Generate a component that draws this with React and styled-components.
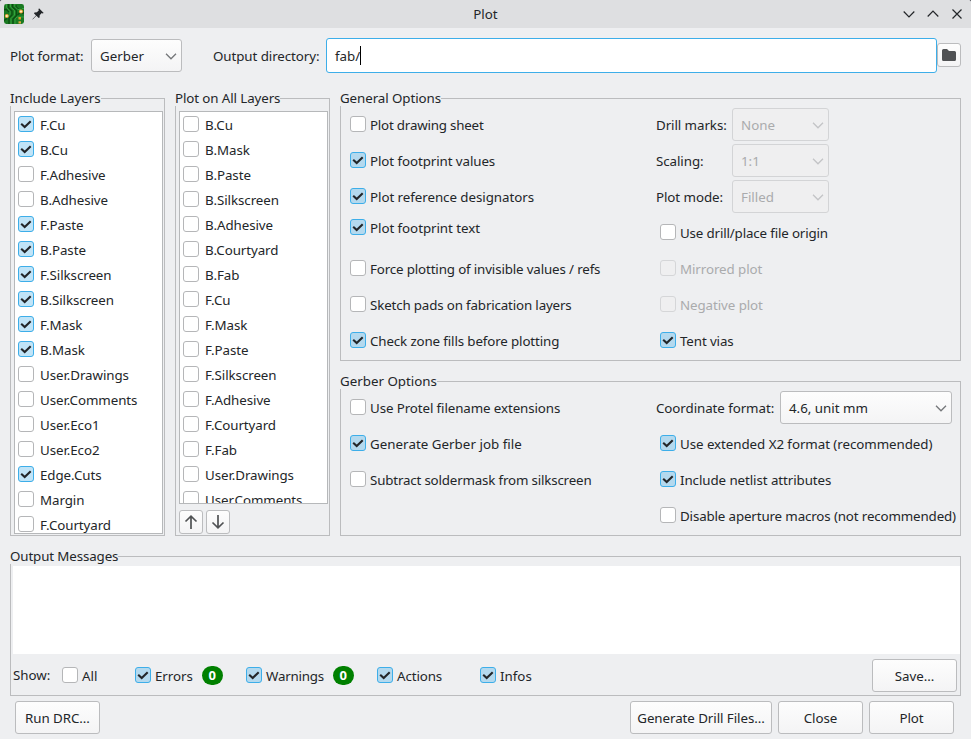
import React from "react";
import styled, { createGlobalStyle, css } from "styled-components";

const C = {
  page: "#eeeff1",
  title: "#dedfe1",
  line: "#bbbcbe",
  text: "#232629",
  accent: "#3daee9",
};

const Global = createGlobalStyle`
  html, body { margin: 0; background: #50535b; }
  body { overflow: hidden; font: 13.333px/18px "Noto Sans", sans-serif; color: ${C.text}; }
  * { box-sizing: border-box; }
`;

const Window = styled.div`
  width: 971px;
  height: 739px;
  background: ${C.page};
  border-radius: 3px 3px 0 0;
  overflow: hidden;
  display: flex;
  flex-direction: column;
  white-space: nowrap;
`;

const TitleBar = styled.header`
  height: 28px;
  flex: none;
  background: ${C.title};
  display: grid;
  grid-template-columns: 1fr auto 1fr;
  align-items: center;
  padding: 0 8px 0 4px;
`;
const TitleIcons = styled.div`
  display: flex;
  align-items: center;
  gap: 7px;
`;
const TitleText = styled.div`
  padding: 0 0 1px 4px;
`;
const WindowControls = styled.div`
  display: flex;
  justify-content: flex-end;
  gap: 12px;
  svg { display: block; }
`;

const TopRow = styled.div`
  height: 35px;
  margin: 10px 10px 0;
  flex: none;
  display: flex;
  align-items: center;
`;
const FieldLabel = styled.label`
  width: ${(p) => p.$w}px;
  margin-left: ${(p) => p.$ml || 0}px;
  letter-spacing: -0.07px;
  flex: none;
`;
const PathInput = styled.div`
  width: 611px;
  height: 35px;
  flex: none;
  background: #fff;
  border: 1px solid ${C.accent};
  border-radius: 3px;
  padding: 0 0 0 8px;
  display: flex;
  align-items: center;
`;
const Caret = styled.span`
  width: 1px;
  height: 19px;
  background: #000;
`;

const face = css`
  border: 1px solid ${C.line};
  border-radius: 3px;
  background: linear-gradient(#fdfdfd, #f4f4f5);
`;
const Button = styled.button`
  ${face}
  width: ${(p) => p.$w}px;
  height: 33px;
  flex: none;
  padding: 0;
  font: inherit;
  letter-spacing: -0.06px;
  color: inherit;
  display: flex;
  align-items: center;
  justify-content: center;
`;
const IconButton = styled(Button)`
  width: 24px;
  height: 24px;
  margin-bottom: 1px;
`;
const SaveButton = styled(Button)`
  margin-top: 1px;
`;
const SelectBox = styled.div`
  ${face}
  width: ${(p) => p.$w}px;
  height: 33px;
  flex: none;
  display: flex;
  align-items: center;
  justify-content: space-between;
  padding: 0 4px 0 8px;
  ${(p) => p.$off && css`
    color: #aaabad;
    background: #efeff0;
    border-color: #d3d4d6;
  `}
`;

const Group = styled.fieldset`
  margin: 0;
  padding: 0;
  border: 1px solid ${C.line};
  width: ${(p) => p.$w}px;
  height: ${(p) => p.$h}px;
  flex: none;
  min-width: 0;
  display: flow-root;
`;
const GroupTitle = styled.div`
  width: max-content;
  height: 15px;
  line-height: 15px;
  margin: -8px 0 0 -1px;
  background: ${C.page};
  letter-spacing: ${(p) => p.$ls || 0}px;
`;

const Panels = styled.div`
  display: flex;
  gap: 10px;
  margin: 25px 10px 0;
`;
const OptionPanels = styled.div`
  display: flex;
  flex-direction: column;
  gap: 20px;
`;

const LayerList = styled.div`
  width: 149px;
  height: ${(p) => p.$h}px;
  margin: 5px 0 0 3px;
  padding: 0 0 0 3px;
  background: #fff;
  border: 1px solid #b6b8ba;
  overflow: hidden;
`;
const LayerRow = styled.div`
  height: 25px;
  padding-bottom: 1px;
  display: flex;
  align-items: center;
  gap: 6px;
  letter-spacing: -0.07px;
`;
const OrderButtons = styled.div`
  display: flex;
  gap: 3px;
  margin: 6px 0 0 3px;
`;

const Box = styled.span`
  width: 16px;
  height: 16px;
  flex: none;
  border: 1px solid #b5b6b8;
  border-radius: 3px;
  background: #fff;
  display: flex;
  ${(p) => p.$on && css`
    border-color: ${C.accent};
    background: ${p.$list ? "#c1e4f7" : "#b4d9ee"};
  `}
  ${(p) => p.$off && css`
    border-color: #d5d6d8;
    background: #efeff0;
  `}
`;
const CheckText = styled.span`
  padding-top: 2px;
`;
const CheckRow = styled.label`
  height: ${(p) => p.$h || 36}px;
  margin: 0 0 ${(p) => p.$mb || 0}px ${(p) => p.$ml || 0}px;
  display: flex;
  align-items: center;
  gap: 4px;
  letter-spacing: ${(p) => p.$ls || 0}px;
  color: ${(p) => (p.$off ? "#aaabad" : "inherit")};
`;

const Columns = styled.div`
  display: grid;
  grid-template-columns: 306px 1fr;
  margin-left: 9px;
`;
const SelectRow = styled.div`
  height: 36px;
  padding-top: 1px;
  display: flex;
  align-items: center;
`;

const Output = styled.div`
  margin: 20px 10px 0;
`;
const Messages = styled.div`
  height: 88px;
  margin: 2px 0 0 2px;
  background: #fff;
`;
const ShowRow = styled.div`
  height: 40px;
  display: flex;
  align-items: center;
  padding: 2px 3px 0 2px;
`;
const ShowLabel = styled.span`
  width: 49px;
  flex: none;
`;
const Filter = styled.div`
  width: ${(p) => p.$w}px;
  flex: none;
  display: flex;
  align-items: center;
  gap: 9px;
`;
const Badge = styled.span`
  width: 21px;
  height: 19px;
  border-radius: 10px;
  background: #008000;
  color: #fff;
  font-weight: 700;
  font-size: 13px;
  display: flex;
  align-items: center;
  justify-content: center;
`;
const Spacer = styled.div`
  flex: 1;
`;
const Footer = styled.footer`
  display: flex;
  gap: 6px;
  margin: 5px 17px 0 15px;
`;

const Tick = () => (
  <svg width="14" height="14" viewBox="0 0 14 14">
    <path d="M2.2 6.700 5.700 10 11.700 4.200" fill="none" stroke={C.text} strokeWidth="2.1" />
  </svg>
);

const Chevron = ({ color = "#75777a" }) => (
  <svg width="12" height="8" viewBox="0 0 12 8">
    <path d="M1 1.800 6 6.800 11 1.800" fill="none" stroke={color} strokeWidth="1.3" />
  </svg>
);

const BoardIcon = () => (
  <svg width="20" height="20" viewBox="0 0 20 20">
    <rect width="20" height="20" rx="2.4" fill="#1a7a22" />
    <g fill="none" stroke="#0c4d12" strokeWidth="1.3">
      <path d="M4.500 0v3.500L8 7v4l-3 3v6M8.500 0v3l4 3.500v5L9 15v5M0 5.500h2.500L5 8M12 1v2l3 2.500" />
      <path d="M20 9h-4.500L13.500 11M0 16.500l3-2" />
    </g>
    <g fill="none" stroke="#35a63e" strokeWidth="0.9">
      <path d="M6.500 0v3l4 3.500v4.500L7 14.500V20M2.500 0v3.500L6 7.500v3L3 13M10.800 0v2.500l3 3h3M20 4.500h-2M11 20v-5l2-2h7" />
    </g>
    <circle cx="17" cy="7.500" r="2" fill="#f2a63b" />
    <circle cx="17" cy="7.500" r="1" fill="#fff3cb" />
    <circle cx="2.800" cy="12" r="2" fill="#f2a63b" />
    <circle cx="2.800" cy="12" r="1" fill="#fff3cb" />
    <rect x="14.500" y="13" width="2.500" height="2.500" fill="#d99a2c" />
    <rect x="14.500" y="17.300" width="2.500" height="2.200" fill="#e2a83c" />
  </svg>
);

const PinIcon = () => (
  <svg width="14" height="14" viewBox="0 0 14 14">
    <path d="M8 1.300 12.700 6 11.400 6.500 10.700 6.100 8.700 8.200 8.600 10.400 7.700 11.100 5.400 8.800 2 12.300 1.400 12.500 1.600 11.900 5 8.400 2.900 6.300 3.600 5.400 5.900 5.300 7.900 3.300 7.400 2.600Z" fill={C.text} />
  </svg>
);

const FolderIcon = () => (
  <svg width="14" height="12" viewBox="0 0 14 12">
    <path d="M0 1.500Q0 0 1.500 0H5L7 2H12.500Q14 2 14 3.500V10.500Q14 12 12.500 12H1.500Q0 12 0 10.500Z" fill="#505254" />
  </svg>
);

const Arrow = ({ down }) => (
  <svg width="14" height="14" viewBox="0 0 14 14">
    <path
      d={down ? "M7 0V13M1.500 7.500 7 12.800 12.500 7.500" : "M7 14V1M1.500 6.500 7 1.200 12.500 6.500"}
      fill="none"
      stroke="#505254"
      strokeWidth="1.7"
    />
  </svg>
);

const WindowIcon = ({ d }) => (
  <svg width="12" height="12" viewBox="0 0 12 12">
    <path d={d} fill="none" stroke={C.text} strokeWidth="1.2" />
  </svg>
);

/* `trim` is the number of pixels taken off the label's natural width. */
const Check = ({ label, on, off, trim = 0, ...rest }) => (
  <CheckRow $off={off} $ls={-trim / label.length} {...rest}>
    <Box $on={on} $off={off}>{on && <Tick />}</Box>
    <CheckText>{label}</CheckText>
  </CheckRow>
);

const Layers = ({ items, h }) => (
  <LayerList $h={h}>
    {items.map(([name, on]) => (
      <LayerRow key={name}>
        <Box $on={on} $list>{on && <Tick />}</Box>
        <CheckText>{name}</CheckText>
      </LayerRow>
    ))}
  </LayerList>
);

const Select = ({ w, off, children }) => (
  <SelectBox $w={w} $off={off}>
    <span>{children}</span>
    <Chevron color={off ? "#c3c4c6" : undefined} />
  </SelectBox>
);

const included = [
  ["F.Cu", 1], ["B.Cu", 1], ["F.Adhesive"], ["B.Adhesive"], ["F.Paste", 1], ["B.Paste", 1],
  ["F.Silkscreen", 1], ["B.Silkscreen", 1], ["F.Mask", 1], ["B.Mask", 1], ["User.Drawings"],
  ["User.Comments"], ["User.Eco1"], ["User.Eco2"], ["Edge.Cuts", 1], ["Margin"], ["F.Courtyard"],
];
const onAll = [
  "B.Cu", "B.Mask", "B.Paste", "B.Silkscreen", "B.Adhesive", "B.Courtyard", "B.Fab", "F.Cu",
  "F.Mask", "F.Paste", "F.Silkscreen", "F.Adhesive", "F.Courtyard", "F.Fab", "User.Drawings",
  "User.Comments",
].map((n) => [n]);

export default function App() {
  return (
    <>
      <Global />
      <Window>
        <TitleBar>
          <TitleIcons><BoardIcon /><PinIcon /></TitleIcons>
          <TitleText>Plot</TitleText>
          <WindowControls>
            <WindowIcon d="M.7 3.500 6 8.800 11.300 3.500" />
            <WindowIcon d="M.7 8.500 6 3.200 11.300 8.500" />
            <WindowIcon d="M1.500 1.500 10.500 10.500M10.500 1.500 1.500 10.500" />
          </WindowControls>
        </TitleBar>
        <TopRow>
          <FieldLabel $w={81}>Plot format:</FieldLabel>
          <Select w={91}>Gerber</Select>
          <FieldLabel $w={113} $ml={31}>Output directory:</FieldLabel>
          <PathInput>fab/<Caret /></PathInput>
          <IconButton><FolderIcon /></IconButton>
        </TopRow>
        <Panels>
          <Group $w={155} $h={438}>
            <GroupTitle>Include Layers</GroupTitle>
            <Layers items={included} h={423} />
          </Group>
          <Group $w={155} $h={438}>
            <GroupTitle $ls={-0.1}>Plot on All Layers</GroupTitle>
            <Layers items={onAll} h={393} />
            <OrderButtons>
              <IconButton><Arrow /></IconButton>
              <IconButton><Arrow down /></IconButton>
            </OrderButtons>
          </Group>
          <OptionPanels>
            <Group $w={621} $h={263}>
              <GroupTitle $ls={-0.08}>General Options</GroupTitle>
              <Columns>
                <div>
                  <Check label="Plot drawing sheet" trim={3.5} />
                  <Check label="Plot footprint values" on trim={1.7} />
                  <Check label="Plot reference designators" on trim={1.3} />
                  <Check label="Plot footprint text" on trim={1} $h={26} $mb={10} />
                  <Check label="Force plotting of invisible values / refs" trim={5.8} />
                  <Check label="Sketch pads on fabrication layers" trim={5} />
                  <Check label="Check zone fills before plotting" on trim={4} />
                </div>
                <div>
                  <SelectRow><FieldLabel $w={76}>Drill marks:</FieldLabel><Select w={97} off>None</Select></SelectRow>
                  <SelectRow><FieldLabel $w={76}>Scaling:</FieldLabel><Select w={97} off>1:1</Select></SelectRow>
                  <SelectRow><FieldLabel $w={76}>Plot mode:</FieldLabel><Select w={97} off>Filled</Select></SelectRow>
                  <Check label="Use drill/place file origin" trim={4} $ml={4} />
                  <Check label="Mirrored plot" off trim={1} $ml={4} />
                  <Check label="Negative plot" off trim={1} $ml={4} />
                  <Check label="Tent vias" on trim={1} $ml={4} />
                </div>
              </Columns>
            </Group>
            <Group $w={621} $h={155}>
              <GroupTitle>Gerber Options</GroupTitle>
              <Columns>
                <div>
                  <Check label="Use Protel filename extensions" trim={3} />
                  <Check label="Generate Gerber job file" on trim={-0.8} />
                  <Check label="Subtract soldermask from silkscreen" trim={6} />
                </div>
                <div>
                  <SelectRow><FieldLabel $w={124}>Coordinate format:</FieldLabel><Select w={172}>4.6, unit mm</Select></SelectRow>
                  <Check label="Use extended X2 format (recommended)" on trim={2} $ml={4} />
                  <Check label="Include netlist attributes" on trim={2} $ml={4} />
                  <Check label="Disable aperture macros (not recommended)" trim={5.5} $ml={4} />
                </div>
              </Columns>
            </Group>
          </OptionPanels>
        </Panels>
        <Output>
          <Group $w={951} $h={140}>
            <GroupTitle $ls={-0.12}>Output Messages</GroupTitle>
            <Messages />
            <ShowRow>
              <ShowLabel>Show:</ShowLabel>
              <Filter $w={73}><Check label="All" /></Filter>
              <Filter $w={111}><Check label="Errors" on trim={0.3} /><Badge>0</Badge></Filter>
              <Filter $w={131}><Check label="Warnings" on trim={1.8} /><Badge>0</Badge></Filter>
              <Filter $w={103}><Check label="Actions" on trim={0.7} /></Filter>
              <Filter $w={60}><Check label="Infos" on /></Filter>
              <Spacer />
              <SaveButton $w={85}>Save...</SaveButton>
            </ShowRow>
          </Group>
        </Output>
        <Footer>
          <Button $w={85}>Run DRC...</Button>
          <Spacer />
          <Button $w={142}>Generate Drill Files...</Button>
          <Button $w={85}>Close</Button>
          <Button $w={85}>Plot</Button>
        </Footer>
      </Window>
    </>
  );
}
